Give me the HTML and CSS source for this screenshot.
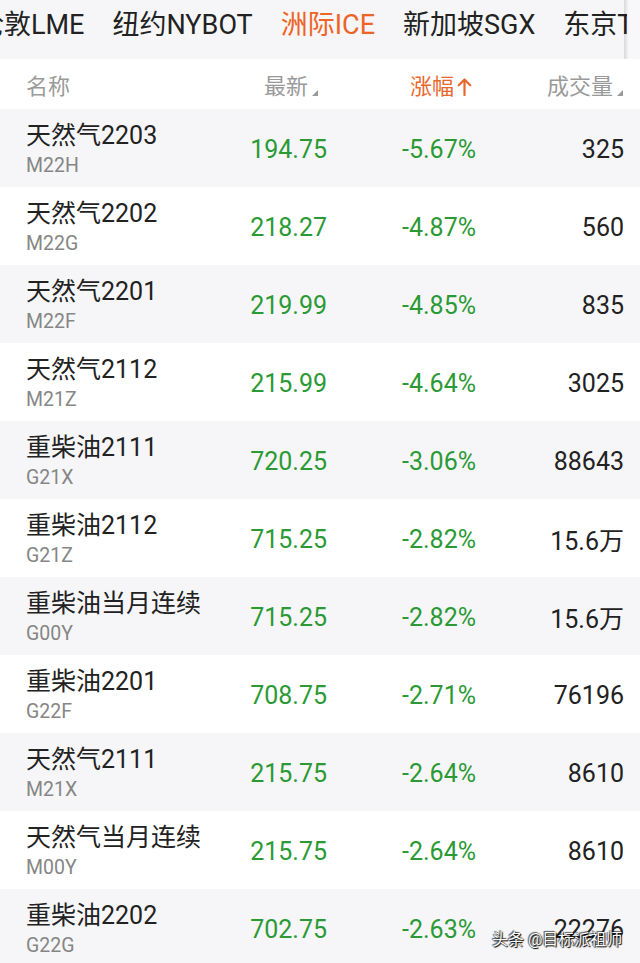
FILE: index.html
```html
<!DOCTYPE html>
<html lang="zh">
<head>
<meta charset="utf-8">
<link rel="stylesheet" href="styles.css">
</head>
<body>
<div class="page">
  <div class="tabbar">
    <div class="tabs">
      <span class="tab">伦敦LME</span>
      <span class="tab">纽约NYBOT</span>
      <span class="tab active">洲际ICE</span>
      <span class="tab">新加坡SGX</span>
      <span class="tab">东京TOCOM</span>
    </div>
    <div class="fade"></div>
  </div>
  <div class="head grid">
    <div class="h-name">名称</div>
    <div class="h-col h-price">最新<i class="tri"></i></div>
    <div class="h-col h-chg">涨幅<svg class="arrow" width="15" height="19" viewBox="0 0 15 19"><path d="M7.5 18V2.5M1.8 8.2L7.5 2.5L13.2 8.2" fill="none" stroke="#e8672b" stroke-width="2.2" stroke-linecap="round" stroke-linejoin="round"/></svg></div>
    <div class="h-col h-vol">成交量<i class="tri"></i></div>
  </div>
  <div class="list">
    <div class="row grid"><div class="name"><div class="n">天然气2203</div><div class="c">M22H</div></div><div class="num">194.75</div><div class="num">-5.67%</div><div class="vol">325</div></div>
    <div class="row grid"><div class="name"><div class="n">天然气2202</div><div class="c">M22G</div></div><div class="num">218.27</div><div class="num">-4.87%</div><div class="vol">560</div></div>
    <div class="row grid"><div class="name"><div class="n">天然气2201</div><div class="c">M22F</div></div><div class="num">219.99</div><div class="num">-4.85%</div><div class="vol">835</div></div>
    <div class="row grid"><div class="name"><div class="n">天然气2112</div><div class="c">M21Z</div></div><div class="num">215.99</div><div class="num">-4.64%</div><div class="vol">3025</div></div>
    <div class="row grid"><div class="name"><div class="n">重柴油2111</div><div class="c">G21X</div></div><div class="num">720.25</div><div class="num">-3.06%</div><div class="vol">88643</div></div>
    <div class="row grid"><div class="name"><div class="n">重柴油2112</div><div class="c">G21Z</div></div><div class="num">715.25</div><div class="num">-2.82%</div><div class="vol">15.6万</div></div>
    <div class="row grid"><div class="name"><div class="n">重柴油当月连续</div><div class="c">G00Y</div></div><div class="num">715.25</div><div class="num">-2.82%</div><div class="vol">15.6万</div></div>
    <div class="row grid"><div class="name"><div class="n">重柴油2201</div><div class="c">G22F</div></div><div class="num">708.75</div><div class="num">-2.71%</div><div class="vol">76196</div></div>
    <div class="row grid"><div class="name"><div class="n">天然气2111</div><div class="c">M21X</div></div><div class="num">215.75</div><div class="num">-2.64%</div><div class="vol">8610</div></div>
    <div class="row grid"><div class="name"><div class="n">天然气当月连续</div><div class="c">M00Y</div></div><div class="num">215.75</div><div class="num">-2.64%</div><div class="vol">8610</div></div>
    <div class="row grid"><div class="name"><div class="n">重柴油2202</div><div class="c">G22G</div></div><div class="num">702.75</div><div class="num">-2.63%</div><div class="vol">22276</div></div>
  </div>
  <div class="watermark">头条 @目标派祖师</div>
</div>
</body>
</html>
```
FILE: styles.css
```css
html, body {
  margin: 0;
  padding: 0;
  background: #ffffff;
}
.page {
  position: relative;
  width: 640px;
  height: 963px;
  overflow: hidden;
  font-family: Roboto, "Noto Sans CJK SC", sans-serif;
  color: #222;
}
.tabbar {
  position: relative;
  height: 59px;
  background: #f6f6f8;
  overflow: hidden;
}
.tabs {
  display: flex;
  gap: 28px;
  margin-left: -23px;
  width: 650px;
  overflow: hidden;
  white-space: nowrap;
  font-size: 27px;
  line-height: 50px;
}
.tab {
  position: relative;
  flex: none;
  color: #222;
}
.tab.active {
  color: #ee6326;
}
.tab.active::after {
  content: "";
  position: absolute;
  left: 50%;
  top: 52px;
  width: 39px;
  height: 5px;
  margin-left: -19px;
  border-radius: 3px;
  background: #ee5f22;
}
.fade {
  position: absolute;
  top: 0;
  right: 0;
  width: 16px;
  height: 59px;
  background: linear-gradient(to right, rgba(0,0,0,0.12) 0, rgba(0,0,0,0.04) 3px, #f8f8fa 5px, #f8f8fa 100%);
}
.grid {
  display: grid;
  grid-template-columns: 1fr 120px 149px 148px;
  padding: 0 16px 0 26px;
  align-items: center;
}
.head {
  height: 50px;
  font-size: 22px;
  color: #9a9a9a;
}
.h-col {
  text-align: right;
  white-space: nowrap;
}
.h-price { padding-right: 9px; }
.h-chg { padding-right: 4px; color: #e8672b; }
.h-vol { padding-right: 1px; }
.arrow {
  display: inline-block;
  margin-left: 3px;
  vertical-align: -2px;
}
.tri {
  display: inline-block;
  width: 0;
  height: 0;
  margin-left: 4px;
  border-style: solid;
  border-width: 0 0 6px 6px;
  border-color: transparent transparent #9a9a9a transparent;
  vertical-align: -2px;
}
.row {
  height: 78px;
}
.row:nth-child(odd) {
  background: #f6f6f8;
}
.name {
  display: flex;
  flex-direction: column;
  white-space: nowrap;
  padding-top: 3px;
}
.n {
  font-size: 25px;
  line-height: 30px;
  color: #222;
}
.c {
  font-size: 19.5px;
  line-height: 24px;
  color: #868686;
  margin-top: 3px;
}
.num {
  text-align: right;
  font-size: 25px;
  color: #2b9a35;
  padding-top: 2px;
}
.vol {
  text-align: right;
  font-size: 25px;
  color: #222;
  padding-top: 2px;
  white-space: nowrap;
}
.watermark {
  position: absolute;
  left: 492px;
  top: 929px;
  font-size: 16px;
  line-height: 22px;
  color: #ffffff;
  white-space: nowrap;
  text-shadow: 0 0 1px #000, 1px 1px 1px #000, -1px -1px 1px rgba(0,0,0,0.6);
}
```
